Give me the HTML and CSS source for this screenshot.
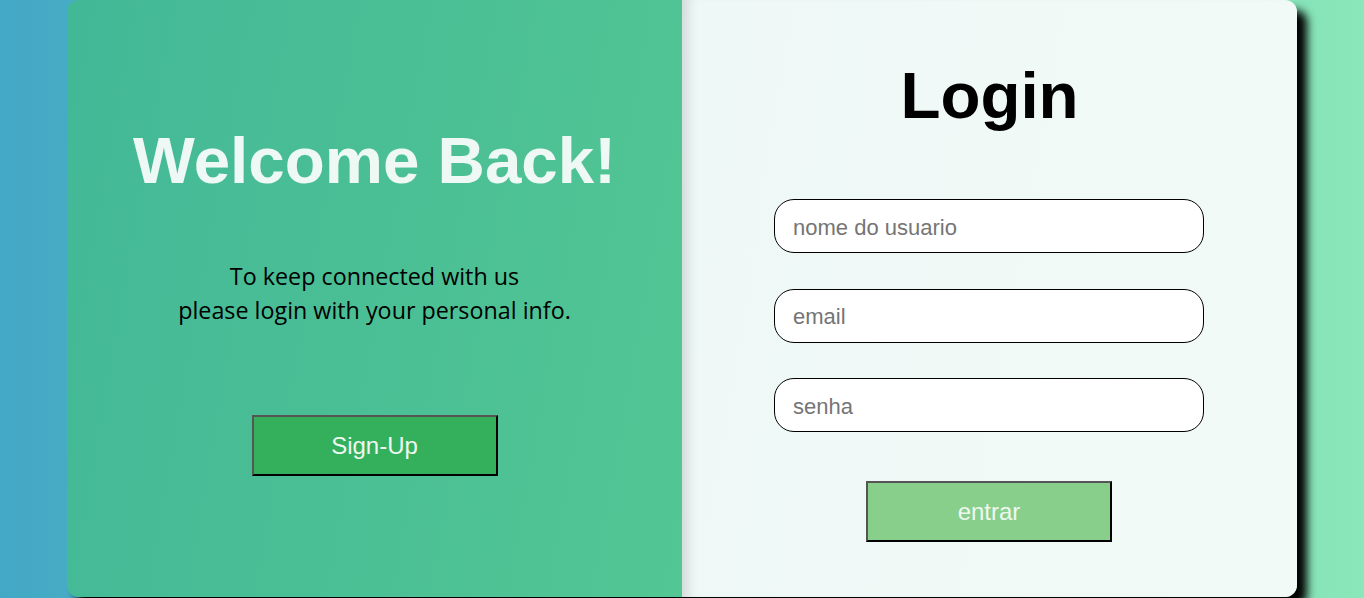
FILE: index.html
```html
<!DOCTYPE html>
<html lang="en">
<head>
<meta charset="utf-8">
<title>Login</title>
<link rel="stylesheet" href="styles.css">
</head>
<body>
  <main class="card">
    <section class="welcome">
      <h1 class="welcome-title">Welcome Back!</h1>
      <p class="welcome-text">To keep connected with us<br>please login with your personal info.</p>
      <button class="btn btn-signup" type="button">Sign-Up</button>
    </section>
    <section class="login">
      <h2 class="login-title">Login</h2>
      <form class="login-form">
        <input class="field" type="text" placeholder="nome do usuario">
        <input class="field" type="email" placeholder="email">
        <input class="field" type="password" placeholder="senha">
        <button class="btn btn-enter" type="button">entrar</button>
      </form>
    </section>
  </main>
</body>
</html>
```
FILE: styles.css
```css
* { box-sizing: border-box; }

html, body {
  margin: 0;
  height: 598px;
  overflow: hidden;
}

body {
  background: linear-gradient(to right, #43a8c5, #8ae7b9);
  font-family: "Liberation Sans", Arial, sans-serif;
}

.card {
  width: 1230px;
  height: 597px;
  margin: 0 auto;
  display: flex;
  border-radius: 12px;
  box-shadow: 10px 10px 10px #000;
}

.welcome {
  width: 615px;
  display: flex;
  flex-direction: column;
  align-items: center;
  padding-top: 127.5px;
  border-radius: 12px 0 0 12px;
  background: linear-gradient(100deg, #43b897, #52c693);
}

.welcome-title {
  margin: 0;
  font-size: 65.5px;
  line-height: 1;
  font-weight: 700;
  color: #eef8f4;
}

.welcome-text {
  margin: 67px 0 0;
  font-family: "Open Sans", "Noto Sans", sans-serif;
  font-size: 23.3px;
  line-height: 33.5px;
  text-align: center;
  color: #000;
}

.btn {
  width: 246px;
  height: 61px;
  border-width: 2px;
  border-style: solid;
  border-color: #555 #000 #000 #555;
  font-family: "Liberation Sans", Arial, sans-serif;
  font-size: 24px;
  color: #eef8f0;
  padding: 0;
}

.btn-signup {
  margin-top: 88px;
  background: #34b05c;
}

.login {
  width: 615px;
  display: flex;
  flex-direction: column;
  align-items: center;
  padding-top: 62.5px;
  border-radius: 0 12px 12px 0;
  background: linear-gradient(100deg, #eef8f6, #f1faf6);
  box-shadow: inset 14px 0 12px -8px rgba(0, 0, 0, 0.12);
}

.login-title {
  margin: 0;
  font-size: 65.5px;
  line-height: 1;
  font-weight: 700;
  color: #000;
}

.login-form {
  margin-top: 71px;
  display: flex;
  flex-direction: column;
  align-items: center;
  gap: 35.5px;
}

.field {
  width: 430px;
  height: 54px;
  margin-right: 1px;
  border: 1px solid #000;
  border-radius: 20px;
  background: #fff;
  padding: 3px 17px 0 18px;
  font-family: "Liberation Sans", Arial, sans-serif;
  font-size: 22px;
  color: #000;
  outline: none;
}

.field::placeholder { color: #757575; }

.btn-enter {
  margin-top: 13.5px;
  margin-right: 1px;
  background: #87cf8a;
}
```
